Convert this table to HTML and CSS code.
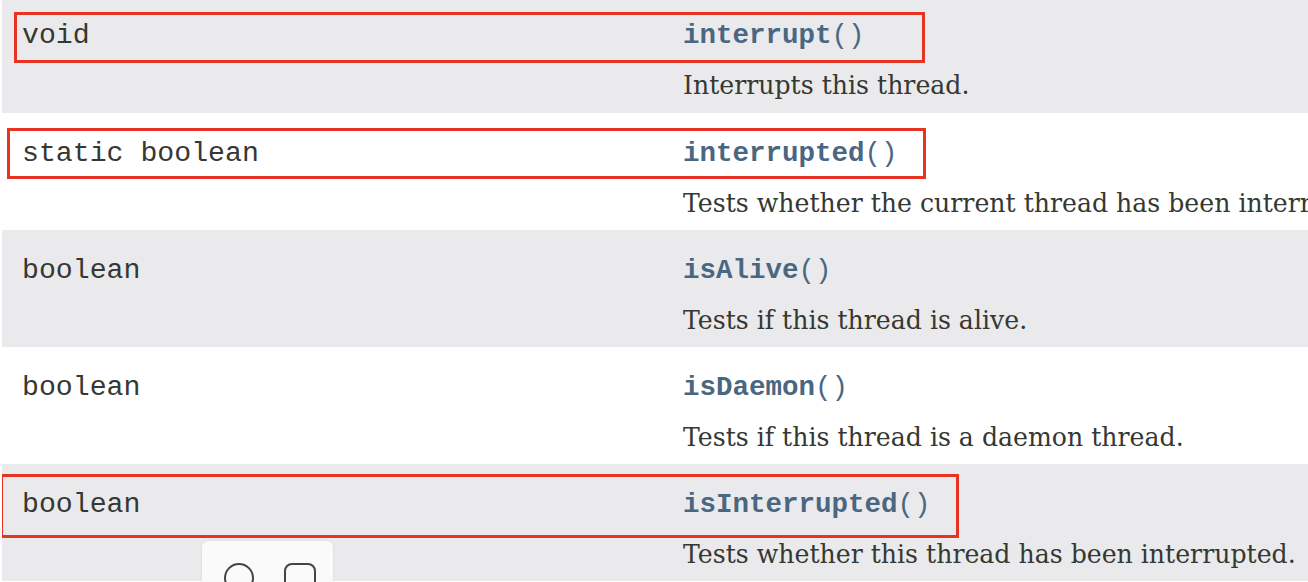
FILE: index.html
```html
<!DOCTYPE html>
<html lang="en">
<head>
<meta charset="utf-8">
<title>Thread methods</title>
<link rel="stylesheet" href="styles.css">
</head>
<body>
<div class="summary">
  <div class="row alt first">
    <div class="type">void</div>
    <div class="member">
      <div class="name"><span class="link">interrupt</span>()</div>
      <div class="desc">Interrupts this thread.</div>
    </div>
  </div>
  <div class="row">
    <div class="type">static boolean</div>
    <div class="member">
      <div class="name"><span class="link">interrupted</span>()</div>
      <div class="desc">Tests whether the current thread has been interrupted.</div>
    </div>
  </div>
  <div class="row alt">
    <div class="type">boolean</div>
    <div class="member">
      <div class="name"><span class="link">isAlive</span>()</div>
      <div class="desc">Tests if this thread is alive.</div>
    </div>
  </div>
  <div class="row">
    <div class="type">boolean</div>
    <div class="member">
      <div class="name"><span class="link">isDaemon</span>()</div>
      <div class="desc">Tests if this thread is a daemon thread.</div>
    </div>
  </div>
  <div class="row alt">
    <div class="type">boolean</div>
    <div class="member">
      <div class="name"><span class="link">isInterrupted</span>()</div>
      <div class="desc">Tests whether this thread has been interrupted.</div>
    </div>
  </div>

  <div class="mark mark-1"></div>
  <div class="mark mark-2"></div>
  <div class="mark mark-3"></div>

  <div class="toolbar">
    <svg class="tool" width="30" height="30" viewBox="0 0 30 30"><circle cx="15" cy="15" r="14" fill="none" stroke="#444" stroke-width="2"/></svg>
    <svg class="tool" width="32" height="32" viewBox="0 0 32 32"><rect x="1" y="1" width="30" height="30" rx="7" fill="none" stroke="#444" stroke-width="2"/></svg>
  </div>
</div>
</body>
</html>
```
FILE: styles.css
```css
html, body {
  margin: 0;
  padding: 0;
  background: #ffffff;
  overflow: hidden;
}

.summary {
  position: relative;
  margin-left: 2px;
  height: 582px;
  overflow: hidden;
}

.row {
  display: grid;
  grid-template-columns: 661px 1fr;
  padding: 25px 0 10px 20px;
  height: 82px;
  background: #ffffff;
  overflow: hidden;
}

.row.alt {
  background: #eaeaec;
}

.row.first {
  padding-top: 20px;
  height: 83px;
  padding-bottom: 10px;
}

.type,
.name {
  font-family: "Liberation Mono", "Courier New", monospace;
  font-size: 27.5px;
  line-height: 32px;
  color: #353833;
  white-space: nowrap;
}

.type {
  font-size: 28.2px;
}

.name {
  color: #4a6782;
}

.link {
  font-weight: bold;
}

.desc {
  margin-top: 18px;
  font-family: "DejaVu Serif", Georgia, serif;
  font-size: 25.2px;
  line-height: 32px;
  color: #353833;
  white-space: nowrap;
}

.mark {
  position: absolute;
  border: 3px solid #e53423;
  box-sizing: border-box;
}

.mark-1 { left: 12px; top: 12px; width: 911px; height: 51px; }
.mark-2 { left: 5px; top: 128px; width: 919px; height: 51px; }
.mark-3 { left: -2px; top: 474px; width: 959px; height: 64px; }

.toolbar {
  position: absolute;
  left: 200px;
  top: 541px;
  width: 131px;
  height: 60px;
  box-sizing: border-box;
  padding: 22px 0 0 22px;
  display: flex;
  align-items: flex-start;
  gap: 30px;
  background: #fafafa;
  border-radius: 6px;
  box-shadow: 0 0 3px rgba(0, 0, 0, 0.08);
}

.tool {
  display: block;
  flex: none;
}
```
